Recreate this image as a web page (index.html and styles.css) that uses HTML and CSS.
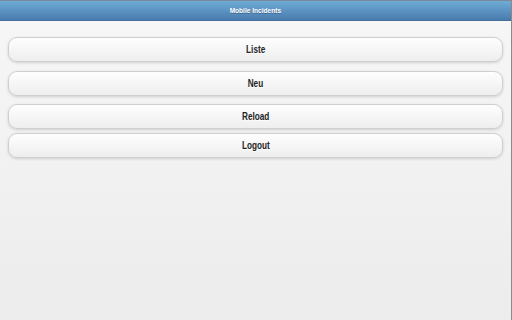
FILE: index.html
```html
<!DOCTYPE html>
<html lang="de">
<head>
  <meta charset="UTF-8">
  <meta name="viewport" content="width=device-width, initial-scale=1">
  <title>Mobile Incidents</title>
  <link rel="stylesheet" href="styles.css">
</head>
<body>
  <div class="page">
    <div class="header">
      <h1><span class="narrow">Mobile Incidents</span></h1>
    </div>
    <div class="content">
      <a class="btn btn-first" href="#"><span class="narrow">Liste</span></a>
      <a class="btn btn-second" href="#"><span class="narrow">Neu</span></a>
      <a class="btn btn-third" href="#"><span class="narrow">Reload</span></a>
      <a class="btn" href="#"><span class="narrow">Logout</span></a>
    </div>
  </div>
</body>
</html>
```

FILE: styles.css
```css
*, *::before, *::after {
  box-sizing: border-box;
}
html, body {
  height: 100%;
}
body {
  margin: 0;
  font-family: "Liberation Sans", Arial, sans-serif;
  background: #f5f5f5;
}
.page {
  min-height: 100%;
  border-right: 1px solid #8a8a8a;
  background: linear-gradient(#f7f7f7, #ececec);
}
.narrow {
  display: inline-block;
  transform: scaleX(0.82);
}
.header {
  height: 21px;
  border-top: 1px solid #7a8a9a;
  border-bottom: 1px solid #456f9a;
  background: linear-gradient(#6facd5, #497bae);
  text-align: center;
}
.header h1 {
  margin: 0;
  font-size: 8px;
  line-height: 19px;
  font-weight: bold;
  color: #fff;
  text-shadow: 0 1px 0 #3e6790;
}
.content {
  padding: 16px 8px;
  display: flex;
  flex-direction: column;
}
.btn {
  display: block;
  height: 25px;
  line-height: 23px;
  margin-bottom: 9px;
  border: 1px solid #cfcfcf;
  border-radius: 9px;
  background: linear-gradient(#fefefe, #eeeeee);
  box-shadow: 0 1px 3px rgba(0,0,0,0.15);
  text-align: center;
  text-decoration: none;
  font-size: 10px;
  font-weight: bold;
  color: #222;
  text-shadow: 0 1px 0 #fff;
}
.btn-second {
  margin-bottom: 8px;
}
.btn-third {
  margin-bottom: 4px;
}
```
